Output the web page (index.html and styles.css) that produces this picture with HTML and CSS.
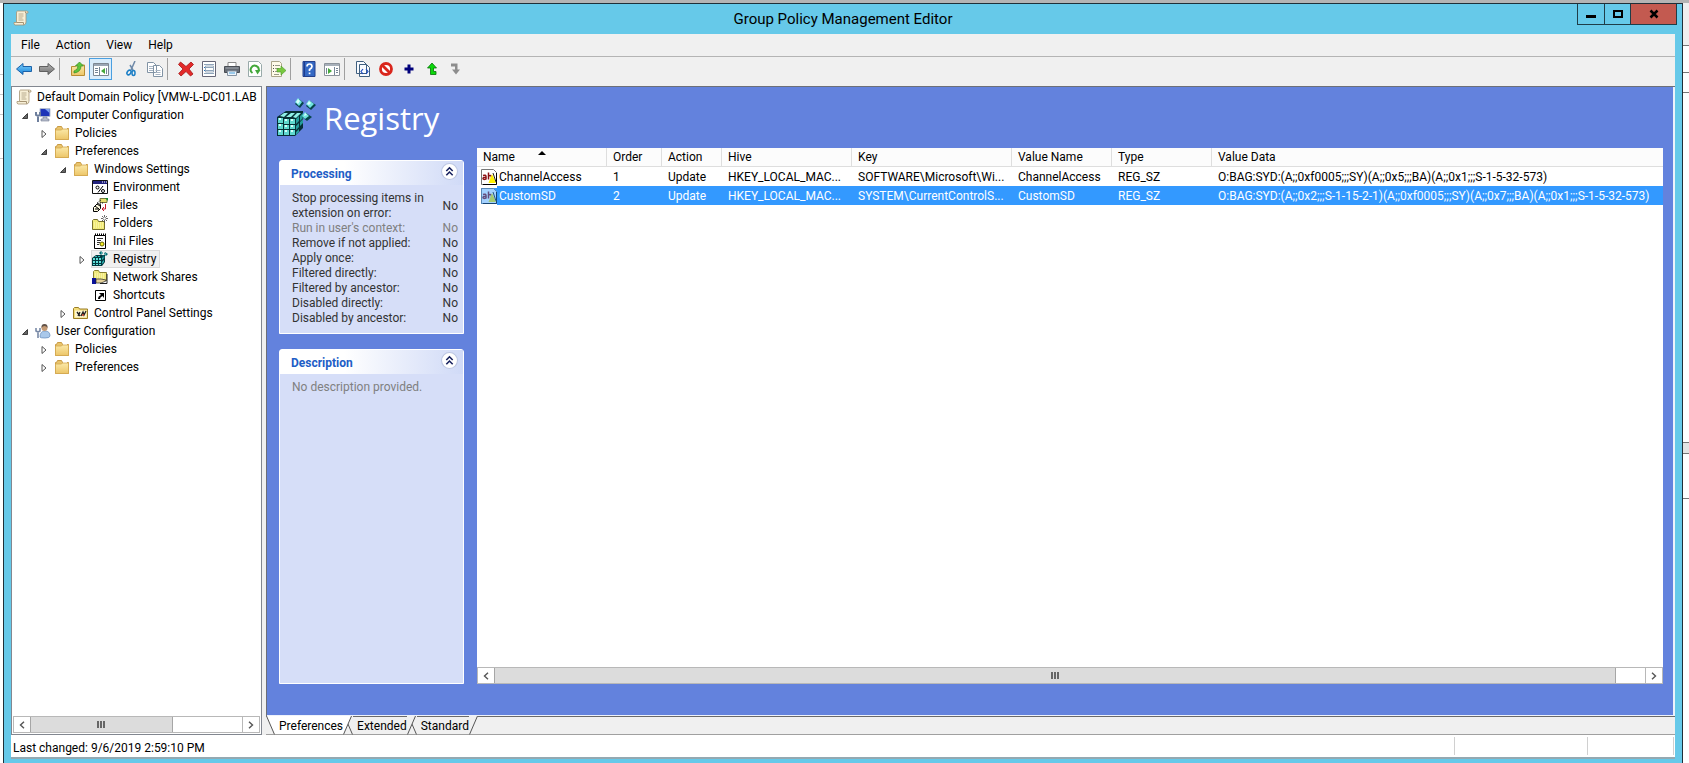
FILE: index.html
```html
<!DOCTYPE html>
<html lang="en">
<head>
<meta charset="utf-8">
<title>Group Policy Management Editor</title>
<link rel="stylesheet" href="styles.css">
</head>
<body>
<svg class="defs" aria-hidden="true">
  <defs>
    <linearGradient id="gFolder" x1="0" y1="0" x2="0" y2="1"><stop offset="0" stop-color="#fbe9a8"/><stop offset="1" stop-color="#ecc568"/></linearGradient>
    <linearGradient id="gBlue" x1="0" y1="0" x2="0" y2="1"><stop offset="0" stop-color="#7fd0fa"/><stop offset="1" stop-color="#1583dc"/></linearGradient>
    <linearGradient id="gGrey" x1="0" y1="0" x2="0" y2="1"><stop offset="0" stop-color="#b5b5b5"/><stop offset="1" stop-color="#6f6f6f"/></linearGradient>
    <symbol id="scroll" viewBox="0 0 16 16">
      <path d="M4.500 1h9q2 0 1.500 2h-2v9q0 2.500-2 3H2q-1.500-.5-1-2.500h2.500V3Q3.500 1 4.500 1z" fill="#f7efd6" stroke="#a59373" stroke-width=".8"/>
      <path d="M12.500 3V1.500M3.500 12.500h7q-.3 2 .5 2.500" fill="none" stroke="#a59373"/>
      <path d="M5.500 4h5M5.500 6h5M5.500 8h4M5.500 10h5" stroke="#b8ab8e"/>
    </symbol>
    <symbol id="folder" viewBox="0 0 16 16">
      <path d="M1.500 3.500h1l1-2h4l1 2h6v11h-13z" fill="#e9c46b" stroke="#c99b45"/>
      <path d="M9 2.500h4v2H9z" fill="#fff"/>
      <path d="M1.500 5h6l1-1h6v10.500h-13z" fill="url(#gFolder)" stroke="#d3a850" stroke-width=".8"/>
    </symbol>
    <symbol id="computer" viewBox="0 0 16 16">
      <path d="M5 1.500h10v8H5z" fill="#1e35b8" stroke="#b6bfd2"/>
      <path d="M10 2h4.500v4z" fill="#7fa4f0"/>
      <path d="M8 10h4v2h2v2H6v-2h2z" fill="#b7bccb" stroke="#747d94" stroke-width=".6"/>
      <path d="M1 5v3l2 1 2-1V5M3 9v6" fill="none" stroke="#6e7f9d" stroke-width="2"/>
    </symbol>
    <symbol id="user" viewBox="0 0 16 16">
      <path d="M5 14q0-6 5-6t5 5q0 2-5 2t-5-1z" fill="#a9c8ea" stroke="#6e93c0" stroke-width=".8"/>
      <circle cx="9.500" cy="5" r="3" fill="#c49a74"/>
      <path d="M6.500 5q-.5-4 3-4t3 4q-1-2-3-2t-3 2z" fill="#625248"/>
      <path d="M1 5v3l2 1 2-1V5M3 9v6" fill="none" stroke="#7889a6" stroke-width="1.600"/>
    </symbol>
    <symbol id="environment" viewBox="0 0 16 16">
      <path d="M.5 1.500h15v13H.5z" fill="#fff" stroke="#111"/>
      <path d="M1 2h14v3H1z" fill="#22227e"/><path d="M10 3h1M12 3h1M14 3h1" stroke="#fff"/>
      <path d="M11 7l-5 6.500" stroke="#000"/><circle cx="5.500" cy="8.500" r="1.500" fill="none" stroke="#000"/><circle cx="11" cy="12" r="1.500" fill="none" stroke="#000"/>
    </symbol>
    <symbol id="files" viewBox="0 0 16 16">
      <path d="M8 1.500h7v4H8z" fill="#e5df6d" stroke="#77773b"/><path d="M13 1h3v3z" fill="#188a35"/>
      <path d="M1.500 14.500v-4l4-4 3 1v4l-3 3z" fill="#fffbe0" stroke="#000"/>
      <path d="M3 12h4M3 9l4 3M5 7l3 2" stroke="#000"/>
      <path d="M13.500 7v5h-3M12 10l-2 2 2 2" fill="none" stroke="#c61a2a"/>
      <path d="M9 3L5 6M8 6h3" stroke="#222" stroke-dasharray="1 1"/>
    </symbol>
    <symbol id="newfolder" viewBox="0 0 16 16">
      <path d="M.5 14.500v-9l1-1h4l1 2h6v8z" fill="#f1ea77" stroke="#77702c"/>
      <path d="M2 8h9M2 10h9M2 12h9" stroke="#fffbc4" stroke-dasharray="1 1"/>
      <path d="M12.500 0v8M9 3.500h7M10 1l5 5M15 1l-5 5" stroke="#444" stroke-width=".8"/><circle cx="12.500" cy="3.500" r="1.300" fill="#fff"/>
    </symbol>
    <symbol id="ini" viewBox="0 0 16 16">
      <path d="M2.500 2.500h11v13h-11z" fill="#fff" stroke="#000"/>
      <path d="M3 1.500h11" stroke="#000" stroke-width="2" stroke-dasharray="1 1"/>
      <path d="M5 5.500h6M5 7.500h4M5 9.500h3M5 11.500h2" stroke="#333"/>
      <circle cx="10" cy="11" r="2" fill="#f4ee24" stroke="#645f00"/>
    </symbol>
    <symbol id="cubes" viewBox="0 0 40 40">
      <path d="M1 19l9-6h17v17l-8 8H1z" fill="#062f36"/>
      <path d="M2 20h5v5H2zM8 21h5v5H8zM14 21h5v5h-5zM2 26h5v5H2zM8 27h5v4H8zM14 27h5v4h-5zM2 32h5v5H2zM8 32h5v5H8zM14 32h5v5h-5z" fill="#5fd8cf"/>
      <path d="M3 20h2v2H3zM9 21h2v2H9zM15 21h2v2h-2zM3 26h2v2H3zM9 27h2v2H9zM15 27h2v2h-2zM3 32h2v2H3zM9 32h2v2H9zM15 32h2v2h-2z" fill="#d6fffa"/>
      <path d="M4 18l4-3h4l-4 4zM10 19l5-4h4l-4 4zM17 19l4-4h4l-5 5z" fill="#8ff0e8"/>
      <path d="M20 21l3-3v5l-3 3zM24 18l3-3v5l-3 3zM20 28l3-3v4l-3 3zM24 24l3-3v4l-3 3zM20 34l3-3v3l-3 3z" fill="#249c9b"/>
      <path d="M23 1l5 4-4 5-5-4zM34 3l6 4-5 5-5-4zM30 15l6 4-5 4-5-4z" fill="#06454b"/>
      <path d="M22 0l4 4-3 4-4-4zM33 2l5 4-4 4-4-4zM29 14l4 4-4 3-3-3z" fill="#6fe3df"/>
      <path d="M22 1l2 2-2 3-2-2zM33 3l2 2-2 2-2-1zM29 15l2 2-3 1z" fill="#d8fffb"/>
    </symbol>
    <symbol id="cubes-small" viewBox="0 0 16 16">
      <path d="M0 7l4-3h9v7l-3 4H0z" fill="#04383f"/>
      <path d="M1 7h2v2H1zM4 7h2v2H4zM7 7h2v2H7zM1 10h2v2H1zM4 10h2v2H4zM7 10h2v2H7zM1 13h2v1H1zM4 13h2v1H4zM7 13h2v1H7z" fill="#5fe0da"/>
      <path d="M3 5h2v1H3zM6 5h2v1H6zM10 7l2-2v2l-2 2zM10 11l2-2v2l-2 2z" fill="#2bb3b3"/>
      <path d="M9 0l2 2-2 2-2-2zM13 1l3 2-2 2-2-2zM11 4l2 2-1 1-2-2z" fill="#0b6a72"/><path d="M9 1l1 1-1 1zM13 2l1 1-1 1z" fill="#7be9e6"/>
    </symbol>
    <symbol id="shares" viewBox="0 0 16 16">
      <path d="M1.500 11.500v-9l1-1h4l1 2h7v8z" fill="#f0e97c" stroke="#8a8232"/>
      <path d="M3 5h10M3 7h10M3 9h10" stroke="#fffbc8" stroke-dasharray="1 1"/>
      <path d="M0 9h4v6H0z" fill="#0a1199"/><path d="M4 10h5l5 1v1l-5 2H4z" fill="#e6d39a" stroke="#222" stroke-width=".7"/>
      <path d="M8 14.500h7V5" fill="none" stroke="#222"/>
    </symbol>
    <symbol id="shortcut" viewBox="0 0 16 16">
      <path d="M3.500 3.500h10v10h-10z" fill="#fff" stroke="#000"/>
      <path d="M6 12q0-3 3-4L7 6h5v5l-1.500-2Q8 10 8 12z" fill="#000"/>
    </symbol>
    <symbol id="control" viewBox="0 0 16 16">
      <path d="M.5 13.500v-10l1-1h4l1 1.500h8v9.500z" fill="#f3dc79" stroke="#9a7d25"/><path d="M2 5.500h11.500v7H2z" fill="#fdf6cf"/>
      <path d="M4 7l3 4M7 7l-2 4M8 11l2-4 1 3 2-4" stroke="#222" fill="none" stroke-width="1.300"/><circle cx="10" cy="10" r="1" fill="#c23b22"/>
    </symbol>
    <symbol id="string" viewBox="0 0 16 16">
      <path d="M.5.500h12l3 3v12H.5z" fill="#fff" stroke="#777"/><path d="M2 15.500h13.500V4" fill="none" stroke="#000"/>
      <path d="M2 6.500q3-1 3 1v3M5 8.500q-3-.5-3 1t3 .500M7.500 3.500v7M7.500 7q3-1.500 3 1.500" fill="none" stroke="#8b0f12" stroke-width="1.500"/>
      <path d="M11 5l4 9H7.500z" fill="#fff200"/>
      <path d="M12 4l3 9" stroke="#222"/>
    </symbol>
    <symbol id="chevrons" viewBox="0 0 16 16"><circle cx="8" cy="8" r="7.500" fill="#fff" stroke="#bcc6e2"/><path d="M5 7.500l3-3 3 3M5 11.500l3-3 3 3" fill="none" stroke="#17215e" stroke-width="1.500"/></symbol>
    <symbol id="open" viewBox="0 0 8 8"><path d="M6.500 1.500v5h-5z" fill="#666" stroke="#222" stroke-width=".8"/></symbol>
    <symbol id="closed" viewBox="0 0 8 8"><path d="M2 0.500v7L6 4z" fill="#fff" stroke="#444" stroke-width=".9"/></symbol>
    <symbol id="left" viewBox="0 0 8 8"><path d="M6 .8L2.500 4 6 7.200" fill="none" stroke="#555" stroke-width="1.400"/></symbol>
    <symbol id="right" viewBox="0 0 8 8"><path d="M2 .8L5.500 4 2 7.200" fill="none" stroke="#555" stroke-width="1.400"/></symbol>
  </defs>
</svg>

<div class="desktop">
  <div class="behind behind-left" aria-hidden="true"><i class="l1"></i><i class="l2"></i><i class="l3"></i><i class="l4"></i></div>
  <main class="window">
    <header class="titlebar">
      <svg class="app-icon" width="16" height="16"><use href="#scroll"/></svg>
      <h1 class="title">Group Policy Management Editor</h1>
      <div class="caption">
        <button class="cap-btn min" aria-label="Minimize"><svg width="12" height="12"><path d="M1 7h10v3H1z"/></svg></button>
        <button class="cap-btn max" aria-label="Maximize"><svg width="12" height="12"><path d="M2 3h8v6H2z" fill="none" stroke="#000" stroke-width="2"/></svg></button>
        <button class="cap-btn close" aria-label="Close"><svg width="12" height="12"><path d="M2.500 2.500l7 7M9.500 2.500l-7 7" stroke="#000" stroke-width="2.500"/></svg></button>
      </div>
    </header>

    <div class="client">
      <nav class="menubar">
        <button>File</button><button>Action</button><button>View</button><button>Help</button>
      </nav>

      <div class="toolbar" role="toolbar" aria-label="Standard">
        <button aria-label="Back"><svg viewBox="0 0 16 16"><path d="M.5 8L7 2.500v3h8.500v5H7v3z" fill="url(#gBlue)" stroke="#1d62a8"/></svg></button>
        <button aria-label="Forward"><svg viewBox="0 0 16 16"><path d="M15.500 8L9 2.500v3H.5v5H9v3z" fill="url(#gGrey)" stroke="#606060"/></svg></button>
        <span class="sep line"></span>
        <button aria-label="Up one level"><svg viewBox="0 0 16 16"><path d="M1.500 14.500v-9h4l1-1.500h8v10.500z" fill="url(#gFolder)" stroke="#b98d32"/><path d="M4 10q4-1 4-5H5.500l4-4 4 4H11q0 6-7 7z" fill="#5fc63c" stroke="#378c25" stroke-width=".7"/></svg></button>
        <button class="on" aria-label="Show or hide console tree"><svg viewBox="0 0 16 16"><path d="M.5 2.500h15v12H.5z" fill="#fff" stroke="#7d8792"/><path d="M1 4h14" stroke="#9aa6b5" stroke-width="2"/><path d="M6.500 6v8M2 7.500h3M2 9.500h3M2 11.500h3M13.500 7v6" stroke="#758597"/><path d="M12 7v6l-4-3z" fill="#43a83b"/></svg></button>
        <span class="sep"></span>
        <button aria-label="Cut"><svg viewBox="0 0 16 16"><path d="M11 0L7 9M6 4l3 5" stroke="#6e89a8" stroke-width="1.500"/><ellipse cx="5" cy="11.500" rx="1.800" ry="2.500" fill="none" stroke="#1c7fc6" stroke-width="1.500" transform="rotate(35 5 11.500)"/><ellipse cx="9.500" cy="12" rx="1.500" ry="2.500" fill="none" stroke="#1c7fc6" stroke-width="1.500"/></svg></button>
        <button aria-label="Copy"><svg viewBox="0 0 16 16"><path d="M.5 1.500h6l3 3v7h-9zM6.500 4.500h6l3 3v8h-9z" fill="#fff" stroke="#8193a5"/><path d="M2 5.500h4M2 7.500h4M2 9.500h4M8.500 9.500h5M8.500 11.500h5M8.500 13.500h5" stroke="#a7b4c3"/></svg></button>
        <span class="sep line"></span>
        <button aria-label="Delete"><svg viewBox="0 0 16 16"><path d="M2.500 1L8 5.500 13 1l2.500 2.500L11 8l4 5-2.500 2L8 10.500 3 15 .7 12.500 5 8 .5 3.500z" fill="#e32a2a" stroke="#a31515" stroke-width=".8"/></svg></button>
        <button aria-label="Properties"><svg viewBox="0 0 16 16"><path d="M1.500.500h13v15h-13z" fill="#fff" stroke="#667"/><path d="M3 3.500h10M5 6.500h8M5 9.500h8M3 12.500h10" stroke="#8fa4ba"/><path d="M3 6.500h1M3 9.500h1" stroke="#2573bb"/><path d="M4.500 5v6h8V5z" fill="none" stroke="#9cadbf"/></svg></button>
        <button aria-label="Print"><svg viewBox="0 0 16 16"><path d="M4 1.500h8v5H4z" fill="#fff" stroke="#8a8a8a"/><path d="M.5 5.500h15v6H.5z" fill="#666c75" stroke="#4a4e55"/><path d="M3.500 10h9v4.500h-9z" fill="#eef5fc" stroke="#8593a2"/><path d="M1.500 7h13" stroke="#a3a9b2"/><path d="M5 12h6" stroke="#49a0dc"/></svg></button>
        <button aria-label="Refresh"><svg viewBox="0 0 16 16"><path d="M1.500.500h10l3 3v12h-13z" fill="#fff" stroke="#9aa"/><path d="M5.500 12A4 4 0 1 1 11.500 10" fill="none" stroke="#43a83b" stroke-width="2"/><path d="M8 9h5.500l-3 4.500z" fill="#43a83b"/></svg></button>
        <button aria-label="Export list"><svg viewBox="0 0 16 16"><path d="M1.500.500h8l2 2v13h-10z" fill="#fffbe9" stroke="#aba58a"/><path d="M3 4.500h1M3 7.500h1M3 10.500h1" stroke="#555"/><path d="M5 4.500h5M5 7.500h4M5 10.500h3M4 13.500h5" stroke="#9a9a8a"/><path d="M7 7.500h4V5l5 4.500-5 4.500v-3H7z" fill="#78c83f" stroke="#4a9c28" stroke-width=".6"/></svg></button>
        <span class="sep line"></span>
        <button aria-label="Help"><svg viewBox="0 0 16 16"><path d="M2 .5h12v15H2z" fill="#3569c4" stroke="#24408c"/><path d="M3.500 1v14" stroke="#1e3c8e"/><path d="M6 5.500Q6 3 8.500 3T11 5.500Q11 7 8.500 8.500V10" fill="none" stroke="#fff" stroke-width="1.700"/><path d="M7.700 11.500h1.700v1.700H7.700z" fill="#fff"/></svg></button>
        <button aria-label="Show or hide action pane"><svg viewBox="0 0 16 16"><path d="M.5 2.500h15v12H.5z" fill="#fff" stroke="#8b929a"/><path d="M1 4h14" stroke="#a7b0ba" stroke-width="2"/><path d="M10.500 6v8M12 7.500h2M12 9.500h2M12 11.500h2M2.500 7v6" stroke="#758597"/><path d="M4 7v6l4-3z" fill="#43a83b"/></svg></button>
        <span class="sep line"></span>
        <button aria-label="View XML"><svg viewBox="0 0 16 16"><path d="M1.500.500h7l3 3v9h-10zM4.500 3.500h7l3 3v9h-10z" fill="#f8fbff" stroke="#3f5f7f"/><path d="M8 8l-2 2.500L8 13M11 8l2 2.500-2 2.500" fill="none" stroke="#1b4bc0" stroke-width="1.200"/></svg></button>
        <button aria-label="Disable"><svg viewBox="0 0 16 16"><circle cx="8" cy="8" r="5.500" fill="#fff" stroke="#d9261c" stroke-width="2.800"/><path d="M4.500 4.500l7 7" stroke="#d9261c" stroke-width="2.800"/></svg></button>
        <button aria-label="Add"><svg viewBox="0 0 16 16"><path d="M6.500 3.500h3v3h3v3h-3v3h-3v-3h-3v-3h3z" fill="#00007b"/></svg></button>
        <button aria-label="Move up"><svg viewBox="0 0 16 16"><path d="M8 2L3.500 7h3v6.500H12v-3H9.500V7h3z" fill="#0bd80b" stroke="#087108" stroke-width=".8"/></svg></button>
        <button aria-label="Move down"><svg viewBox="0 0 16 16"><path d="M4 2.500h6.500v6H13l-4 5-4-5h3V5.500H4z" fill="#8d8d8d"/></svg></button>
      </div>

      <div class="panes">
        <aside class="tree-pane">
          <ul class="tree">
            <li><div class="node root"><span class="item"><svg><use href="#scroll"/></svg>Default Domain Policy [VMW-L-DC01.LAB</span></div>
              <ul class="top">
                <li><div class="node"><button class="twist" aria-label="Collapse"><svg><use href="#open"/></svg></button><span class="item"><svg><use href="#computer"/></svg>Computer Configuration</span></div>
                  <ul>
                    <li><div class="node"><button class="twist" aria-label="Expand"><svg><use href="#closed"/></svg></button><span class="item"><svg><use href="#folder"/></svg>Policies</span></div></li>
                    <li><div class="node"><button class="twist" aria-label="Collapse"><svg><use href="#open"/></svg></button><span class="item"><svg><use href="#folder"/></svg>Preferences</span></div>
                      <ul>
                        <li><div class="node"><button class="twist" aria-label="Collapse"><svg><use href="#open"/></svg></button><span class="item"><svg><use href="#folder"/></svg>Windows Settings</span></div>
                          <ul>
                            <li><div class="node"><span class="twist"></span><span class="item"><svg><use href="#environment"/></svg>Environment</span></div></li>
                            <li><div class="node"><span class="twist"></span><span class="item"><svg><use href="#files"/></svg>Files</span></div></li>
                            <li><div class="node"><span class="twist"></span><span class="item"><svg><use href="#newfolder"/></svg>Folders</span></div></li>
                            <li><div class="node"><span class="twist"></span><span class="item"><svg><use href="#ini"/></svg>Ini Files</span></div></li>
                            <li><div class="node"><button class="twist" aria-label="Expand"><svg><use href="#closed"/></svg></button><span class="item current"><svg><use href="#cubes-small"/></svg>Registry</span></div></li>
                            <li><div class="node"><span class="twist"></span><span class="item"><svg><use href="#shares"/></svg>Network Shares</span></div></li>
                            <li><div class="node"><span class="twist"></span><span class="item"><svg><use href="#shortcut"/></svg>Shortcuts</span></div></li>
                          </ul>
                        </li>
                        <li><div class="node"><button class="twist" aria-label="Expand"><svg><use href="#closed"/></svg></button><span class="item"><svg><use href="#control"/></svg>Control Panel Settings</span></div></li>
                      </ul>
                    </li>
                  </ul>
                </li>
                <li><div class="node"><button class="twist" aria-label="Collapse"><svg><use href="#open"/></svg></button><span class="item"><svg><use href="#user"/></svg>User Configuration</span></div>
                  <ul>
                    <li><div class="node"><button class="twist" aria-label="Expand"><svg><use href="#closed"/></svg></button><span class="item"><svg><use href="#folder"/></svg>Policies</span></div></li>
                    <li><div class="node"><button class="twist" aria-label="Expand"><svg><use href="#closed"/></svg></button><span class="item"><svg><use href="#folder"/></svg>Preferences</span></div></li>
                  </ul>
                </li>
              </ul>
            </li>
          </ul>
          <div class="hscroll tree-scroll">
            <button aria-label="Scroll left"><svg><use href="#left"/></svg></button>
            <div class="thumb"><i></i><i></i><i></i></div><div class="track"></div>
            <button aria-label="Scroll right"><svg><use href="#right"/></svg></button>
          </div>
        </aside>

        <section class="main-pane">
          <div class="result">
            <div class="banner"><svg class="logo"><use href="#cubes"/></svg><h2>Registry</h2></div>
            <div class="body">
              <div class="cards">
                <section class="card">
                  <div class="card-head"><h3>Processing</h3><button aria-label="Collapse Processing"><svg><use href="#chevrons"/></svg></button></div>
                  <dl class="props">
                    <div><dt>Stop processing items in extension on error:</dt><dd>No</dd></div>
                    <div class="dim"><dt>Run in user's context:</dt><dd>No</dd></div>
                    <div><dt>Remove if not applied:</dt><dd>No</dd></div>
                    <div><dt>Apply once:</dt><dd>No</dd></div>
                    <div><dt>Filtered directly:</dt><dd>No</dd></div>
                    <div><dt>Filtered by ancestor:</dt><dd>No</dd></div>
                    <div><dt>Disabled directly:</dt><dd>No</dd></div>
                    <div><dt>Disabled by ancestor:</dt><dd>No</dd></div>
                  </dl>
                </section>
                <section class="card grow">
                  <div class="card-head"><h3>Description</h3><button aria-label="Collapse Description"><svg><use href="#chevrons"/></svg></button></div>
                  <p class="desc">No description provided.</p>
                </section>
              </div>
              <div class="list">
                <div class="list-view">
                  <table>
                    <colgroup><col class="c130"><col class="c55"><col class="c60"><col class="c130"><col class="c160"><col class="c100"><col class="c100"><col></colgroup>
                    <thead><tr><th class="sorted">Name</th><th>Order</th><th>Action</th><th>Hive</th><th>Key</th><th>Value Name</th><th>Type</th><th>Value Data</th></tr></thead>
                    <tbody>
                      <tr><td><svg><use href="#string"/></svg>ChannelAccess</td><td>1</td><td>Update</td><td>HKEY_LOCAL_MAC...</td><td>SOFTWARE\Microsoft\Wi...</td><td>ChannelAccess</td><td>REG_SZ</td><td>O:BAG:SYD:(A;;0xf0005;;;SY)(A;;0x5;;;BA)(A;;0x1;;;S-1-5-32-573)</td></tr>
                      <tr class="selected"><td><svg><use href="#string"/></svg>CustomSD</td><td>2</td><td>Update</td><td>HKEY_LOCAL_MAC...</td><td>SYSTEM\CurrentControlS...</td><td>CustomSD</td><td>REG_SZ</td><td>O:BAG:SYD:(A;;0x2;;;S-1-15-2-1)(A;;0xf0005;;;SY)(A;;0x7;;;BA)(A;;0x1;;;S-1-5-32-573)</td></tr>
                    </tbody>
                  </table>
                </div>
                <div class="hscroll list-scroll">
                  <button aria-label="Scroll left"><svg><use href="#left"/></svg></button>
                  <div class="thumb"><i></i><i></i><i></i></div><div class="track"></div>
                  <button aria-label="Scroll right"><svg><use href="#right"/></svg></button>
                </div>
              </div>
            </div>
          </div>
          <div class="tabs" role="tablist">
            <button class="tab active" role="tab" aria-selected="true"><svg width="9" height="19"><path d="M0 0h9v19z"/><path class="edge" d="M.5 0l8 18.500"/></svg><span>Preferences</span><svg width="9" height="19"><path d="M0 0h9L0 19z"/><path class="edge" d="M8.500 0l-8 18.500"/></svg></button>
            <button class="tab" role="tab"><svg width="9" height="19"><path d="M0 0h9v19z"/><path class="edge" d="M.5 0l8 18.500"/></svg><span>Extended</span><svg width="9" height="19"><path d="M0 0h9L0 19z"/><path class="edge" d="M8.500 0l-8 18.500"/></svg></button>
            <button class="tab" role="tab"><svg width="9" height="19"><path d="M0 0h9v19z"/><path class="edge" d="M.5 0l8 18.500"/></svg><span>Standard</span><svg width="9" height="19"><path d="M0 0h9L0 19z"/><path class="edge" d="M8.500 0l-8 18.500"/></svg></button>
          </div>
        </section>
      </div>

      <footer class="status"><span class="msg">Last changed: 9/6/2019 2:59:10 PM</span><span class="cell wide"></span><span class="cell"></span><span class="cell end"></span></footer>
    </div>
  </main>
  <div class="behind behind-right" aria-hidden="true"><i class="r1"></i><i class="r2"></i><i class="r3"></i><i class="r4"></i><i class="r5"></i><i class="r6"></i></div>
</div>
</body>
</html>
```
FILE: styles.css
```css
* { box-sizing: border-box; }
body { margin: 0; font: 12px/18px Roboto, "Open Sans", sans-serif; color: #000; }
button { font: inherit; color: inherit; background: none; border: 0; padding: 0; margin: 0; }
h1, h2, h3, p, ul, dl, dd { margin: 0; padding: 0; }
ul { list-style: none; }
svg { display: block; flex: none; }
.defs { position: absolute; width: 0; height: 0; }

.desktop { display: flex; height: 100vh; overflow: hidden; background: #fff; border-top: 3px solid #b4b4b4; }
.behind { display: flex; flex-direction: column; flex: none; width: 3px; }
.behind i { flex: none; border-bottom: 1px solid #777; }
.l1 { height: 72px; } .l2 { height: 20px; } .l3 { height: 20px; } .l4 { height: 44px; }
.behind-left i { border-color: #c8c8c8; }
.behind.behind-right { width: 6px; }
.r1 { height: 43px; background: #efefef; } .r2 { height: 27px; } .r3 { height: 20px; } .r4 { height: 350px; } .r5 { height: 11px; background: #e4e4e4; } .r6 { height: 45px; }

.window { flex: 1; min-width: 0; display: flex; flex-direction: column; background: #66c9e9; border: solid #1f2f38; border-width: 1px 1px 0; padding: 0 7px 4px 7px; }
.titlebar { display: flex; height: 30px; align-items: flex-start; position: relative; }
.app-icon { margin: 6px 0 0 2px; }
.title { flex: 1; text-align: center; font-size: 15px; font-weight: 400; line-height: 30px; padding-right: 18px; }
.caption { position: absolute; top: 0; right: -2px; display: flex; border: 1px solid #1f3d48; border-top: 0; }
.cap-btn { display: flex; align-items: center; justify-content: center; width: 26px; height: 20px; }
.cap-btn + .cap-btn { border-left: 1px solid #1f3d48; }
.cap-btn.close { width: 46px; background: #c35a50; }

.client { flex: 1; min-height: 0; display: flex; flex-direction: column; background: #f0f0f0; border-bottom: 2px solid #93a9b2; }
.menubar { display: flex; height: 23px; padding-left: 2px; border-bottom: 1px solid #b4b4b4; }
.menubar button { padding: 0 8px; line-height: 22px; }
.toolbar { display: flex; align-items: center; height: 29px; padding: 0 0 5px 1px; }
.toolbar button { display: flex; align-items: center; justify-content: center; width: 23px; height: 22px; }
.toolbar button.on { border: 1px solid #4a9fe0; background: #d9ecfb; }
.toolbar svg { width: 16px; height: 16px; }
.sep { width: 8px; height: 22px; }
.sep.line::before { content: ""; display: block; width: 1px; height: 22px; margin-left: 1px; background: #a0a0a0; }

.panes { flex: 1; min-height: 0; display: flex; gap: 4px; }
.tree-pane { width: 251px; flex: none; display: flex; flex-direction: column; background: #fff; border: 1px solid #828790; padding: 1px; }
.tree { flex: 1; min-height: 0; overflow: hidden; }
.tree ul { padding-left: 19px; }
.tree ul.top { padding-left: 5px; }
.node { display: flex; height: 18px; white-space: nowrap; }
.node.root { padding-left: 2px; }
.twist { flex: none; width: 16px; display: flex; align-items: center; padding-left: 3px; }
.twist svg { width: 8px; height: 8px; margin-top: 2px; }
.item { display: flex; align-items: center; gap: 5px; height: 18px; padding-right: 3px; border: 1px solid transparent; }
.item svg { width: 16px; height: 16px; }
.item.current { background: #f0f0f0; border-color: #dadada; }

.hscroll { display: flex; height: 17px; border: 1px solid #b8b8b8; background: #fff; }
.hscroll button { width: 16px; display: flex; align-items: center; justify-content: center; }
.hscroll svg { width: 8px; height: 8px; }
.thumb { display: flex; align-items: center; justify-content: center; gap: 1px; background: #dcdcdc; border: solid #a6a6a6; border-width: 0 1px; }
.thumb i { width: 2px; height: 7px; background: #666; }
.track { border-right: 1px solid #b8b8b8; }
.tree-scroll .thumb { flex: 143; } .tree-scroll .track { flex: 70; }
.list-scroll .thumb { flex: 1123; } .list-scroll .track { flex: 29; }

.main-pane { flex: 1; min-width: 0; display: flex; flex-direction: column; }
.result { flex: 1; min-height: 0; display: flex; flex-direction: column; background: #6382dd; border: solid #6c6f78; border-width: 1px 0 0 1px; box-shadow: inset -2px -1px #eef2fb; padding: 11px 12px 32px; }
.banner { display: flex; align-items: center; gap: 8px; height: 50px; padding-bottom: 10px; color: #fff; }
.banner .logo { width: 40px; height: 40px; margin-left: -3px; }
.banner h2 { font-family: "Open Sans", "Noto Sans", sans-serif; font-size: 31px; font-weight: 400; line-height: 38px; }
.body { flex: 1; min-height: 0; display: flex; gap: 13px; }
.cards { width: 185px; flex: none; display: flex; flex-direction: column; gap: 15px; padding-top: 12px; }
.card { background: #d6def8; border: 1px solid #fff; border-radius: 3px 3px 0 0; color: #333; line-height: 15px; }
.card.grow { flex: 1; }
.card-head { display: flex; justify-content: space-between; align-items: flex-start; height: 24px; padding: 2px 5px 0 11px; background: linear-gradient(90deg, #fff 35%, #d0daf7); }
.card-head h3 { font-size: 12px; line-height: 22px; color: #215dc6; }
.card-head svg { width: 17px; height: 17px; }
.props { padding: 6px 5px 7px 12px; }
.props div { display: flex; justify-content: space-between; align-items: center; }
.props dt { width: 140px; white-space: normal; }
.props .dim, .desc { color: #808080; }
.desc { padding: 6px 12px; }

.list { flex: 1; min-width: 0; display: flex; flex-direction: column; background: #fff; }
.list-view { flex: 1; min-height: 0; overflow: hidden; }
table { width: 100%; table-layout: fixed; border-collapse: separate; border-spacing: 0; }
.c55 { width: 55px; } .c60 { width: 60px; } .c100 { width: 100px; } .c130 { width: 130px; } .c160 { width: 160px; }
th, td { height: 19px; padding: 0 0 0 6px; line-height: 18px; font-weight: 400; text-align: left; white-space: nowrap; overflow: hidden; }
th { background: #fcfcfc; border: solid #dedede; border-width: 0 1px 1px 0; position: relative; }
th:last-child { border-right: 0; }
.sorted::after { content: ""; position: absolute; left: 61px; top: 3px; border: solid transparent; border-width: 0 4px 4px; border-bottom-color: #000; }
td:first-child { padding-left: 4px; }
td svg { float: left; width: 16px; height: 16px; margin: 1px 2px 0 0; }
.selected td { background: #3399ff; color: #fff; }
.selected td:first-child { background: linear-gradient(90deg, #fff 20px, #3399ff 20px); }
.selected svg { background: #3399ff; }
.selected use { opacity: .55; }

.tabs { display: flex; height: 19px; border-top: 1px solid #6a6a6a; border-bottom: 1px solid #a0a0a0; }
.tab { display: flex; position: relative; height: 19px; margin: -1px 0 0; }
.tab + .tab { margin-left: -8px; }
.tab span { height: 18px; padding-left: 4px; background: #f0f0f0; border-top: 1px solid #6a6a6a; line-height: 19px; }
.tab:nth-child(1) { z-index: 3; } .tab:nth-child(2) { z-index: 2; } .tab:nth-child(3) { z-index: 1; }
.tab path { fill: #f0f0f0; }
.tab .edge { fill: none; stroke: #555; }
.tab.active span { background: #fff; border-color: #fff; }
.tab.active path { fill: #fff; }
.tab.active .edge { fill: none; }

.status { display: flex; height: 22px; background: #fff; }
.msg { flex: 1; padding: 2px 0 0 2px; line-height: 22px; }
.cell { width: 86px; margin: 2px 0; border-left: 1px solid #d0d0d0; }
.cell.wide { width: 133px; } .cell.end { width: 2px; }
```
